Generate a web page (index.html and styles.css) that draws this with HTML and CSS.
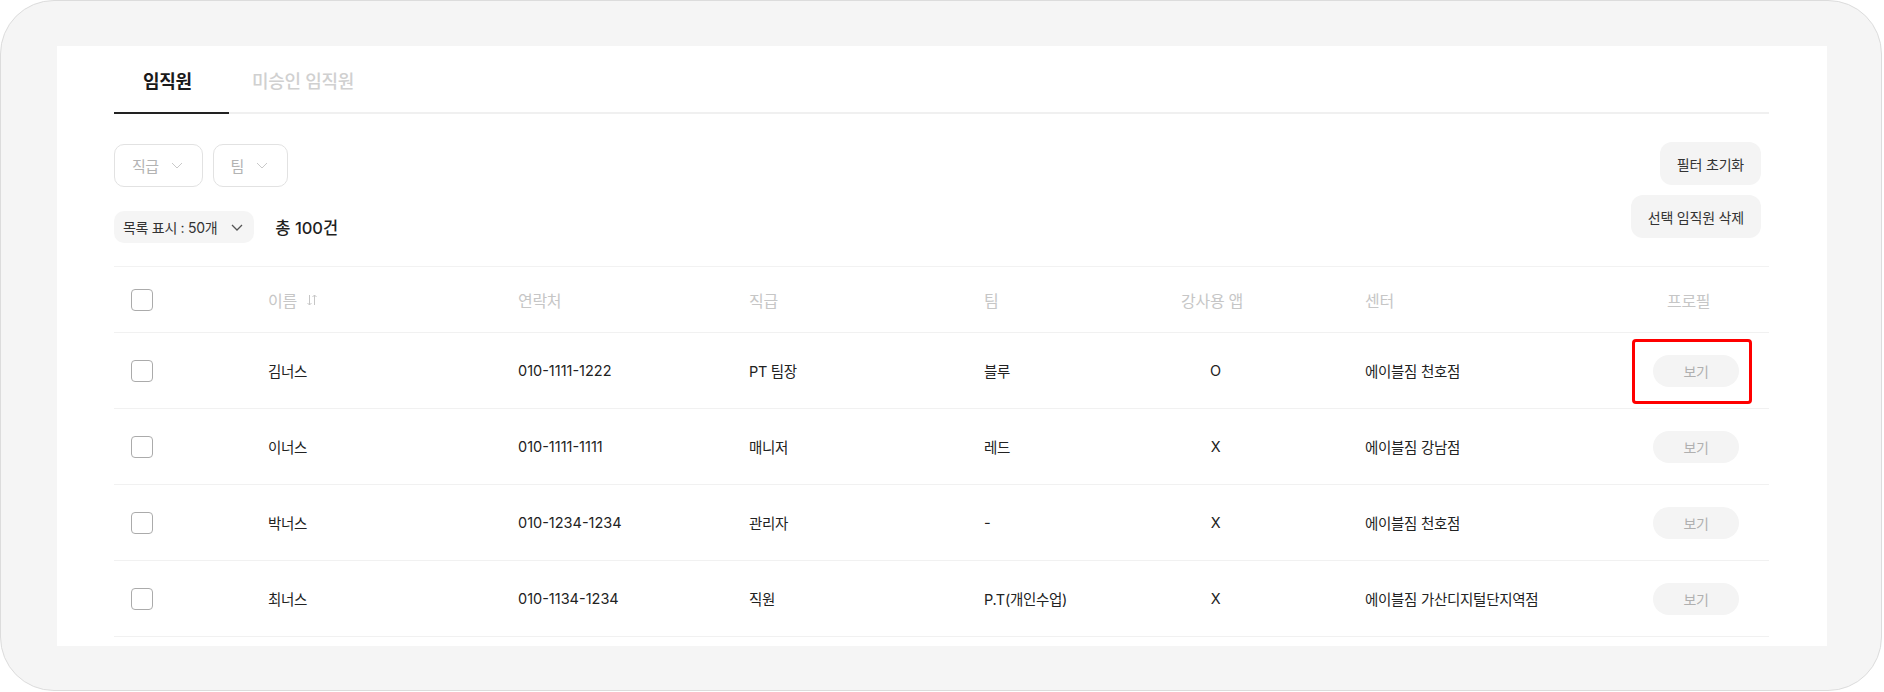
FILE: index.html
```html
<!DOCTYPE html>
<html lang="ko">
<head>
    <meta charset="UTF-8">
    <meta name="viewport" content="width=device-width, initial-scale=1.0">
    <title>임직원 관리</title>
    <link rel="stylesheet" href="styles.css">
</head>
<body>
    <div class="frame">
        <div class="panel">
            <div class="tabs">
                <button class="tab active">임직원</button>
                <button class="tab">미승인 임직원</button>
            </div>

            <div class="toolbar">
                <div class="toolbar-left">
                    <div class="filters">
                        <button class="filter">직급
                            <svg width="12" height="7" viewBox="0 0 12 7"><path d="M1 1l5 5 5-5" fill="none" stroke="#c9c9c9" stroke-width="1"/></svg>
                        </button>
                        <button class="filter">팀
                            <svg width="12" height="7" viewBox="0 0 12 7"><path d="M1 1l5 5 5-5" fill="none" stroke="#c9c9c9" stroke-width="1"/></svg>
                        </button>
                    </div>
                    <div class="summary">
                        <button class="page-size">목록 표시 : 50개
                            <svg width="12" height="7" viewBox="0 0 12 7"><path d="M1 1l5 5 5-5" fill="none" stroke="#555" stroke-width="1.3"/></svg>
                        </button>
                        <span class="total">총 100건</span>
                    </div>
                </div>
                <div class="toolbar-right">
                    <button class="btn-soft">필터 초기화</button>
                    <button class="btn-soft">선택 임직원 삭제</button>
                </div>
            </div>

            <div class="table">
                <div class="row head">
                    <div class="cell"><span class="check"></span></div>
                    <div class="cell">이름
                        <svg class="sort" width="12" height="12" viewBox="0 0 12 12"><path d="M3.5 1v10M1.5 9l2 2 2-2M8.5 11V1M6.5 3l2-2 2 2" fill="none" stroke="#c6c6c6" stroke-width="1"/></svg>
                    </div>
                    <div class="cell">연락처</div>
                    <div class="cell">직급</div>
                    <div class="cell">팀</div>
                    <div class="cell center">강사용 앱</div>
                    <div class="cell branch">센터</div>
                    <div class="cell profile">프로필</div>
                </div>

                <div class="row">
                    <div class="cell"><span class="check"></span></div>
                    <div class="cell">김너스</div>
                    <div class="cell phone">010-1111-1222</div>
                    <div class="cell">PT 팀장</div>
                    <div class="cell">블루</div>
                    <div class="cell center">O</div>
                    <div class="cell branch">에이블짐 천호점</div>
                    <div class="cell view">
                        <button class="btn-view">보기</button>
                        <span class="highlight"></span>
                    </div>
                </div>

                <div class="row">
                    <div class="cell"><span class="check"></span></div>
                    <div class="cell">이너스</div>
                    <div class="cell phone">010-1111-1111</div>
                    <div class="cell">매니저</div>
                    <div class="cell">레드</div>
                    <div class="cell center">X</div>
                    <div class="cell branch">에이블짐 강남점</div>
                    <div class="cell view"><button class="btn-view">보기</button></div>
                </div>

                <div class="row">
                    <div class="cell"><span class="check"></span></div>
                    <div class="cell">박너스</div>
                    <div class="cell phone">010-1234-1234</div>
                    <div class="cell">관리자</div>
                    <div class="cell">-</div>
                    <div class="cell center">X</div>
                    <div class="cell branch">에이블짐 천호점</div>
                    <div class="cell view"><button class="btn-view">보기</button></div>
                </div>

                <div class="row">
                    <div class="cell"><span class="check"></span></div>
                    <div class="cell">최너스</div>
                    <div class="cell phone">010-1134-1234</div>
                    <div class="cell">직원</div>
                    <div class="cell">P.T(개인수업)</div>
                    <div class="cell center">X</div>
                    <div class="cell branch">에이블짐 가산디지털단지역점</div>
                    <div class="cell view"><button class="btn-view">보기</button></div>
                </div>
            </div>
        </div>
    </div>
</body>
</html>
```

FILE: styles.css
```css
* {
    box-sizing: border-box;
}
body {
    margin: 0;
    font-family: "Inter", "Noto Sans CJK KR", sans-serif;
    color: #222;
    background: #fff;
}
button {
    font-family: inherit;
    border: none;
    background: none;
    padding: 0;
    cursor: pointer;
}

/* outer device frame */
.frame {
    width: 1882px;
    height: 691px;
    border: 1px solid #dcdcdc;
    border-radius: 54px;
    background-color: #f5f5f5;
    padding: 45px 0 0 56px;
}
.panel {
    width: 1770px;
    height: 600px;
    background-color: #fff;
    padding: 0 58px 0 57px;
    overflow: hidden;
}

/* tabs */
.tabs {
    display: flex;
    height: 68px;
    border-bottom: 2px solid #f0f0f0;
}
.tab {
    height: 68px;
    margin-bottom: -2px;
    padding: 2px 23px 0;
    font-size: 18px;
    letter-spacing: -0.3px;
    font-weight: 500;
    color: #d0d0d0;
    border-bottom: 2px solid transparent;
}
.tab:first-child {
    width: 115px;
    padding: 2px 0 0 29px;
    text-align: left;
}
.tab.active {
    color: #1a1a1a;
    font-weight: 700;
    border-bottom-color: #222;
}

/* filter / action bar */
.toolbar {
    display: flex;
    justify-content: space-between;
    margin-top: 28px;
    padding-right: 8px;
}
.filters {
    display: flex;
    gap: 10px;
    margin-top: 2px;
}
.filter {
    display: flex;
    align-items: center;
    gap: 12px;
    height: 43px;
    padding: 0 19px 0 17px;
    border: 1px solid #e2e2e2;
    border-radius: 10px;
    font-size: 15px;
    letter-spacing: -0.5px;
    color: #b3b3b3;
}
.summary {
    display: flex;
    align-items: center;
    gap: 21px;
    margin-top: 24px;
}
.page-size {
    display: flex;
    align-items: center;
    gap: 14px;
    height: 32px;
    padding: 0 11px 0 9px;
    background-color: #f5f5f5;
    border-radius: 10px;
    font-size: 14px;
    letter-spacing: -0.3px;
    color: #333;
}
.total {
    font-size: 16.5px;
    font-weight: 500;
    color: #1f1f1f;
}
.toolbar-right {
    display: flex;
    flex-direction: column;
    align-items: flex-end;
    gap: 10px;
}
.btn-soft {
    height: 43px;
    padding: 0 17px;
    background-color: #f4f4f4;
    border-radius: 12px;
    font-size: 14px;
    letter-spacing: -0.2px;
    color: #333;
}

/* employee table */
.table {
    margin-top: 23px;
    border-top: 1px solid #f2f2f2;
}
.row {
    display: grid;
    grid-template-columns: 154px 250px 231px 235px 143px 170px 1fr 137px;
    align-items: center;
    height: 76px;
    border-bottom: 1px solid #f1f1f1;
    font-size: 14.5px;
    letter-spacing: -0.3px;
}
.row.head {
    height: 66px;
    font-size: 16px;
    letter-spacing: -0.3px;
    color: #c6c6c6;
}
.cell {
    display: flex;
    align-items: center;
}
.cell.center {
    justify-content: center;
}
.row:not(.head) .cell.center {
    padding-left: 7px;
}
.cell.phone {
    letter-spacing: 0;
}
.cell.branch {
    padding-left: 68px;
}
.cell.profile {
    padding-left: 35px;
}
.cell.view {
    position: relative;
    height: 100%;
    padding-left: 21px;
}
.check {
    width: 22px;
    height: 22px;
    margin-left: 17px;
    border: 1.5px solid #ababab;
    border-radius: 4px;
}
.sort {
    margin-left: 9px;
}
.btn-view {
    width: 86px;
    height: 32px;
    border-radius: 16px;
    background-color: #f4f4f4;
    font-size: 14px;
    letter-spacing: -0.3px;
    color: #b0b0b0;
}
.highlight {
    position: absolute;
    top: 6px;
    left: 0;
    width: 120px;
    height: 65px;
    border: 3px solid #ff0000;
    border-radius: 4px;
}
```
